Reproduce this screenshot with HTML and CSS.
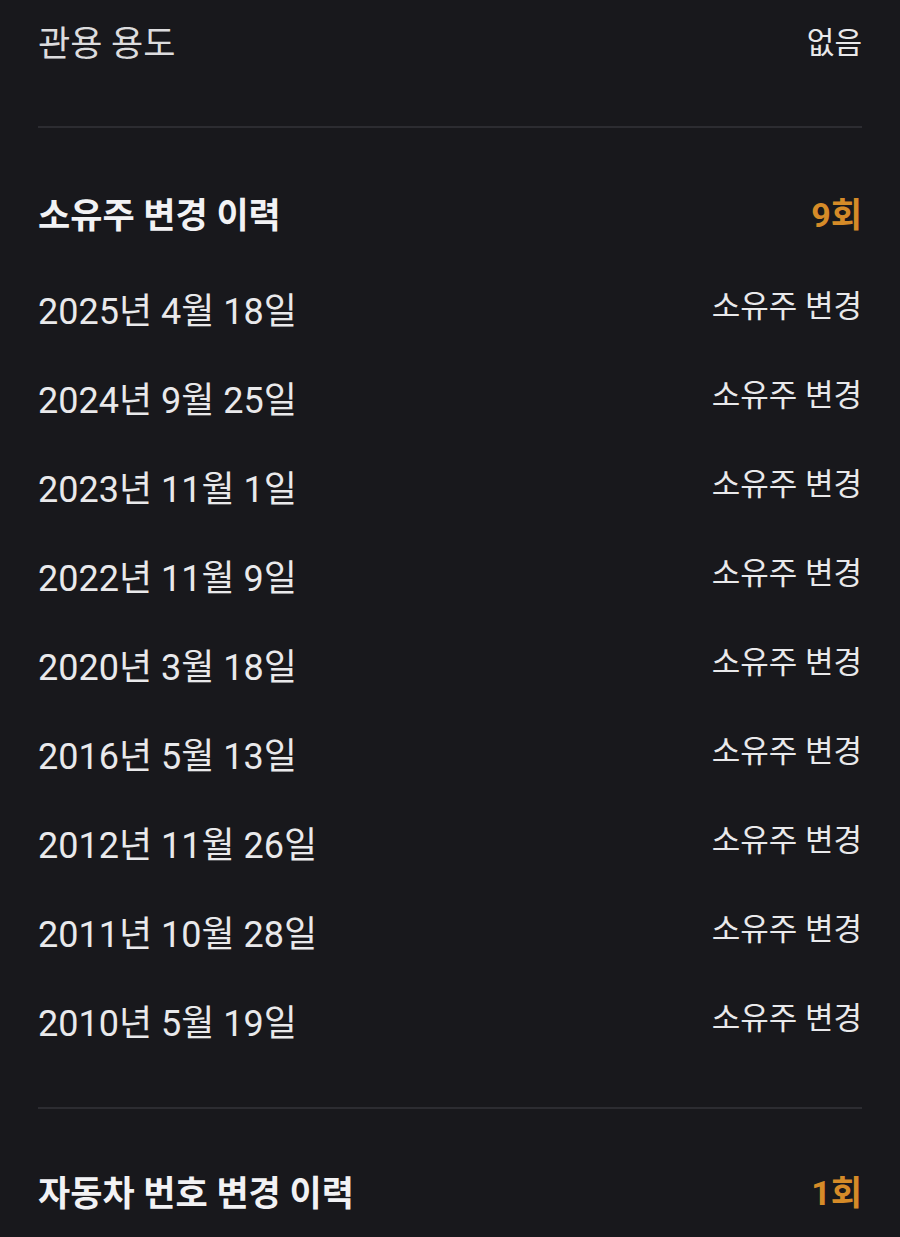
FILE: index.html
```html
<!DOCTYPE html>
<html lang="ko">
<head>
<meta charset="utf-8">
<link rel="stylesheet" href="styles.css">
</head>
<body>
<div class="page">
  <div class="top-row">
    <span class="label">관용 용도</span>
    <span class="value">없음</span>
  </div>
  <hr class="divider">
  <section class="section">
    <div class="section-head">
      <h2 class="title">소유주 변경 이력</h2>
      <span class="count">9회</span>
    </div>
    <ul class="list">
      <li class="item"><span class="date">2025년 4월 18일</span><span class="kind">소유주 변경</span></li>
      <li class="item"><span class="date">2024년 9월 25일</span><span class="kind">소유주 변경</span></li>
      <li class="item"><span class="date">2023년 11월 1일</span><span class="kind">소유주 변경</span></li>
      <li class="item"><span class="date">2022년 11월 9일</span><span class="kind">소유주 변경</span></li>
      <li class="item"><span class="date">2020년 3월 18일</span><span class="kind">소유주 변경</span></li>
      <li class="item"><span class="date">2016년 5월 13일</span><span class="kind">소유주 변경</span></li>
      <li class="item"><span class="date">2012년 11월 26일</span><span class="kind">소유주 변경</span></li>
      <li class="item"><span class="date">2011년 10월 28일</span><span class="kind">소유주 변경</span></li>
      <li class="item"><span class="date">2010년 5월 19일</span><span class="kind">소유주 변경</span></li>
    </ul>
  </section>
  <hr class="divider divider-low">
  <section class="section section-last">
    <div class="section-head">
      <h2 class="title">자동차 번호 변경 이력</h2>
      <span class="count">1회</span>
    </div>
  </section>
</div>
</body>
</html>
```

FILE: styles.css
```css
html, body {
  margin: 0;
  padding: 0;
  background: #18181c;
}
body {
  font-family: Roboto, "Noto Sans CJK KR", sans-serif;
  color: #e9e9eb;
}
.page {
  padding: 0 38px;
}
.top-row {
  display: flex;
  justify-content: space-between;
  align-items: center;
  height: 80px;
}
.label {
  font-size: 35px;
  color: #dcdcde;
}
.value {
  font-size: 30px;
}
.divider {
  border: 0;
  height: 2px;
  background: #2c2c31;
  margin: 46px 0 0;
}
.divider-low {
  margin-top: 43px;
}
.section {
  padding-top: 40px;
}
.section-last {
  padding-top: 37px;
}
.section-head {
  display: flex;
  justify-content: space-between;
  align-items: center;
  height: 88px;
}
.title {
  margin: 0;
  font-size: 35px;
  font-weight: 700;
  color: #f2f2f4;
}
.count {
  font-size: 34px;
  font-weight: 700;
  color: #d58b28;
}
.list {
  list-style: none;
  margin: 8px 0 0;
  padding: 0;
}
.item {
  display: flex;
  justify-content: space-between;
  align-items: center;
  height: 88.9px;
}
.date {
  font-size: 36px;
}
.kind {
  font-size: 31px;
  margin-top: -9px;
}
```
